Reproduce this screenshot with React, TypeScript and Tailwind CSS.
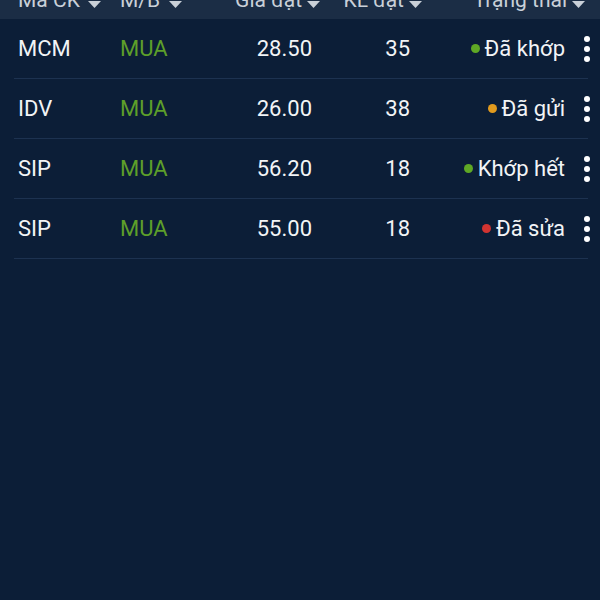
import React from 'react';

type Order = {
  code: string;
  side: string;
  price: string;
  qty: string;
  status: string;
  dot: string;
};

const orders: Order[] = [
  { code: 'MCM', side: 'MUA', price: '28.50', qty: '35', status: 'Đã khớp', dot: 'bg-[#5fa825]' },
  { code: 'IDV', side: 'MUA', price: '26.00', qty: '38', status: 'Đã gửi', dot: 'bg-[#e29b1e]' },
  { code: 'SIP', side: 'MUA', price: '56.20', qty: '18', status: 'Khớp hết', dot: 'bg-[#5fa825]' },
  { code: 'SIP', side: 'MUA', price: '55.00', qty: '18', status: 'Đã sửa', dot: 'bg-[#d23431]' },
];

const Caret = ({ gap }: { gap: string }) => (
  <svg width="13" height="7" viewBox="0 0 13 7" className={`${gap} mt-[11px] shrink-0`}>
    <path d="M0 0 L13 0 L6.5 7 Z" fill="#c9d0d8" />
  </svg>
);

const Kebab = () => (
  <div className="flex flex-col items-center gap-[4px]">
    <span className="block w-[6px] h-[6px] rounded-full bg-white" />
    <span className="block w-[6px] h-[6px] rounded-full bg-white" />
    <span className="block w-[6px] h-[6px] rounded-full bg-white" />
  </div>
);

const App: React.FC = () => {
  return (
    <div
      className="w-[600px] h-[600px] bg-[#0c1e37] overflow-hidden"
      style={{ fontFamily: 'Roboto, "Noto Sans", sans-serif' }}
    >
      <div className="h-[19px] bg-[#1b2d45] overflow-hidden">
        <div className="flex items-start text-[21px] leading-[21px] text-[#c9d0d8] -mt-[10px] pl-[18px]">
          <div className="w-[102px] flex">Mã CK<Caret gap="ml-[8px]" /></div>
          <div className="w-[92px] flex">M/B<Caret gap="ml-[9px]" /></div>
          <div className="w-[108px] flex justify-end">Giá đặt<Caret gap="ml-[5px]" /></div>
          <div className="w-[102px] flex justify-end">KL đặt<Caret gap="ml-[5px]" /></div>
          <div className="w-[163px] flex justify-end">Trạng thái<Caret gap="ml-[5px]" /></div>
        </div>
      </div>

      <div>
        {orders.map((o, i) => (
          <div
            key={i}
            className="ml-[14px] mr-[12px] h-[60px] flex items-center border-b border-[#1d3250] text-[22px] text-[#f2f4f6]"
          >
            <div className="w-[106px] pl-[4px]">{o.code}</div>
            <div className="w-[110px] text-[#5d9f2a]">{o.side}</div>
            <div className="w-[82px] text-right">{o.price}</div>
            <div className="w-[98px] text-right">{o.qty}</div>
            <div className="w-[155px] flex items-center justify-end">
              <span className={`w-[9px] h-[9px] rounded-full mr-[5px] ${o.dot}`} />
              <span>{o.status}</span>
            </div>
            <div className="flex-1 flex justify-end">
              <div className="mr-[-2px]">
                <Kebab />
              </div>
            </div>
          </div>
        ))}
      </div>
    </div>
  );
};

export default App;
